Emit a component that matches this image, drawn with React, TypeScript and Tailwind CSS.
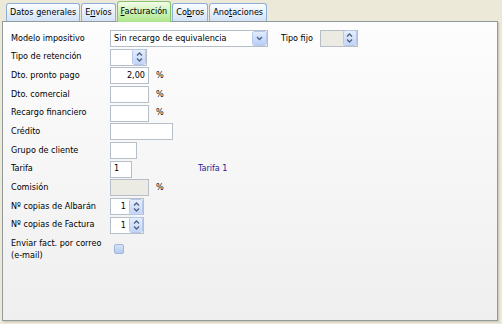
import React from 'react'

const FONT: React.CSSProperties = {
  fontFamily: '"DejaVu Sans Condensed", "DejaVu Sans", sans-serif',
  fontStretch: 'condensed'
}
const TXT = 'text-[9px]'

const TABS = [
  { label: 'Datos generales', idx: 6 },
  { label: 'Envíos', idx: 1 },
  { label: 'Facturación', idx: 0, active: true },
  { label: 'Cobros', idx: 2 },
  { label: 'Anotaciones', idx: 3 }
]

function Mnemonic({ text, idx }: { text: string; idx: number }): React.JSX.Element {
  return (
    <span className="whitespace-pre">
      {text.slice(0, idx)}
      <span className="underline underline-offset-1">{text[idx]}</span>
      {text.slice(idx + 1)}
    </span>
  )
}

function Arrows(): React.JSX.Element {
  return (
    <div className="flex h-[14px] w-[12px] flex-col items-center justify-center rounded-[2px] bg-gradient-to-b from-[#e6eefc] to-[#c3d5f5] ring-1 ring-[#b6c8ee]">
      <svg width="7" height="12" viewBox="0 0 7 12" fill="none" stroke="#4d6185" strokeWidth="1.3">
        <path d="M1 4.5 L3.5 2 L6 4.5" />
        <path d="M1 7.5 L3.5 10 L6 7.5" />
      </svg>
    </div>
  )
}

function Spin({ w, value, disabled }: { w: number; value?: string; disabled?: boolean }): React.JSX.Element {
  return (
    <div
      className={`flex h-[17px] items-center justify-end border border-[#b6bfc8] pr-[1px] ${disabled ? 'bg-[#ebebe4]' : 'bg-white'}`}
      style={{ width: w }}
    >
      {value && <span className={`mr-[4px] leading-none ${TXT}`}>{value}</span>}
      <Arrows />
    </div>
  )
}

function Box({
  w,
  value,
  align = 'left',
  disabled
}: {
  w: number
  value?: string
  align?: 'left' | 'right'
  disabled?: boolean
}): React.JSX.Element {
  return (
    <div
      className={`flex h-[17px] items-center border border-[#b6bfc8] px-[3px] ${TXT} ${disabled ? 'bg-[#ebebe4]' : 'bg-white'} ${align === 'right' ? 'justify-end' : 'justify-start'}`}
      style={{ width: w }}
    >
      {value}
    </div>
  )
}

function Row({ label, children }: { label: string; children?: React.ReactNode }): React.JSX.Element {
  return (
    <div className="flex h-[18.7px] items-center">
      <span className={`w-[99px] shrink-0 whitespace-nowrap ${TXT}`}>{label}</span>
      <div className="flex items-center">{children}</div>
    </div>
  )
}

function Pct(): React.JSX.Element {
  return <span className={`ml-[7px] ${TXT}`}>%</span>
}

export default function App(): React.JSX.Element {
  return (
    <div className="h-[324px] w-[502px] overflow-hidden bg-[#ece9d8] text-black" style={FONT}>
      <div className="flex h-[21px] items-end pl-[6px]">
        {TABS.map((t) =>
          t.active ? (
            <div
              key={t.label}
              className={`relative z-10 -mb-[1px] mr-[1px] flex h-[21px] items-center rounded-t-[3px] border border-b-0 border-[#86c46c] bg-gradient-to-b from-[#f2fde9] via-[#cdf2b4] to-[#aee58b] px-[3px] ${TXT}`}
            >
              <Mnemonic text={t.label} idx={t.idx} />
            </div>
          ) : (
            <div
              key={t.label}
              className={`mr-[1px] flex h-[18px] items-center rounded-t-[3px] border border-b-0 border-[#8eaed8] bg-gradient-to-b from-[#fbfdff] to-[#d2e2f6] px-[3px] ${TXT}`}
            >
              <Mnemonic text={t.label} idx={t.idx} />
            </div>
          )
        )}
      </div>
      <div className="ml-[2px] h-[300px] w-[496px] border border-[#919b9c] bg-gradient-to-b from-[#fdfdfd] to-[#efefef] pl-[8px] pt-[7px] shadow-[1px_1px_0_#d0cdbd,2px_2px_0_#e0ddcc]">
        <div className="flex items-center">
          <Row label="Modelo impositivo">
            <div className={`flex h-[17px] w-[158px] items-center justify-between border border-[#b6bfc8] bg-white pl-[3px] pr-[1px] ${TXT}`}>
              <span className="whitespace-nowrap">Sin recargo de equivalencia</span>
              <div className="flex h-[13px] w-[13px] items-center justify-center rounded-[2px] bg-gradient-to-b from-[#e1ebfd] to-[#b8cff6] ring-1 ring-[#b6c8ee]">
                <svg width="7" height="5" viewBox="0 0 7 5" fill="none" stroke="#4d6185" strokeWidth="1.4">
                  <path d="M1 1 L3.5 3.5 L6 1" />
                </svg>
              </div>
            </div>
          </Row>
          <span className={`ml-[13px] mr-[7px] ${TXT}`}>Tipo fijo</span>
          <Spin w={38} disabled />
        </div>
        <Row label="Tipo de retención">
          <Spin w={37} />
        </Row>
        <Row label="Dto. pronto pago">
          <Box w={39} value="2,00" align="right" />
          <Pct />
        </Row>
        <Row label="Dto. comercial">
          <Box w={39} />
          <Pct />
        </Row>
        <Row label="Recargo financiero">
          <Box w={39} />
          <Pct />
        </Row>
        <Row label="Crédito">
          <Box w={63} />
        </Row>
        <Row label="Grupo de cliente">
          <Box w={27} />
        </Row>
        <Row label="Tarifa">
          <Box w={22} value="1" />
          <span className={`ml-[66px] text-[#23239c] ${TXT}`}>Tarifa 1</span>
        </Row>
        <Row label="Comisión">
          <Box w={39} disabled />
          <Pct />
        </Row>
        <Row label="Nº copias de Albarán">
          <Spin w={34} value="1" />
        </Row>
        <Row label="Nº copias de Factura">
          <Spin w={34} value="1" />
        </Row>
        <div className="mt-[2px] flex items-center">
          <span className={`w-[103px] shrink-0 leading-[12px] ${TXT}`}>
            Enviar fact. por correo
            <br />
            (e-mail)
          </span>
          <div className="h-[10px] w-[10px] rounded-[2px] border border-[#9fb6dc] bg-gradient-to-b from-[#d6e3f7] to-[#b5ccef]" />
        </div>
      </div>
    </div>
  )
}
